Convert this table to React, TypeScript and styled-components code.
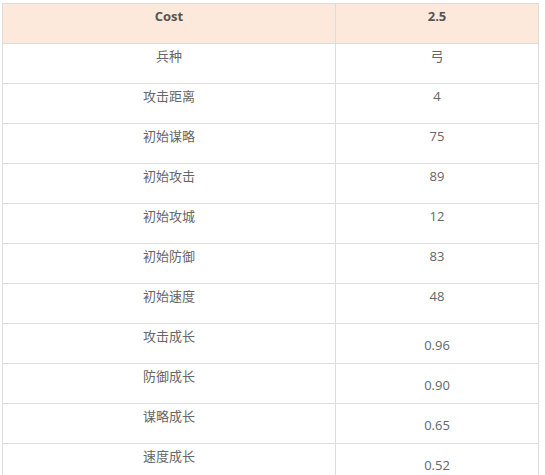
import React from "react";
import styled, { createGlobalStyle } from "styled-components";

const GlobalStyle = createGlobalStyle`
  body {
    margin: 0;
    padding: 3px 0 0 2px;
    background: #fff;
    font-family: "Open Sans", "Noto Sans CJK SC", sans-serif;
  }
`;

const Table = styled.table`
  width: 537px;
  border-collapse: collapse;
  table-layout: fixed;
  color: #666;
  font-size: 13px;
`;

const HeadRow = styled.tr`
  background: #fde9dc;
`;

const Cell = styled.td<{ $bold?: boolean; $low?: boolean }>`
  height: 40px;
  box-sizing: border-box;
  border: 1px solid #dcdcdc;
  text-align: center;
  vertical-align: top;
  line-height: 20px;
  padding: ${(p) => (p.$low ? "11px" : "2px")} 0 0;
  font-weight: ${(p) => (p.$bold ? 700 : 400)};
  color: ${(p) => (p.$bold ? "#555" : "#666")};
`;

const rows: [string, string, boolean][] = [
  ["兵种", "弓", false],
  ["攻击距离", "4", false],
  ["初始谋略", "75", false],
  ["初始攻击", "89", false],
  ["初始攻城", "12", false],
  ["初始防御", "83", false],
  ["初始速度", "48", false],
  ["攻击成长", "0.96", true],
  ["防御成长", "0.90", true],
  ["谋略成长", "0.65", true],
  ["速度成长", "0.52", true],
];

const App: React.FC = () => {
  return (
    <>
      <GlobalStyle />
      <Table>
        <colgroup>
          <col style={{ width: 333 }} />
          <col />
        </colgroup>
        <tbody>
          <HeadRow>
            <Cell $bold>Cost</Cell>
            <Cell $bold>2.5</Cell>
          </HeadRow>
          {rows.map(([label, value, low]) => (
            <tr key={label}>
              <Cell>{label}</Cell>
              <Cell $low={low}>{value}</Cell>
            </tr>
          ))}
        </tbody>
      </Table>
    </>
  );
};

export default App;
